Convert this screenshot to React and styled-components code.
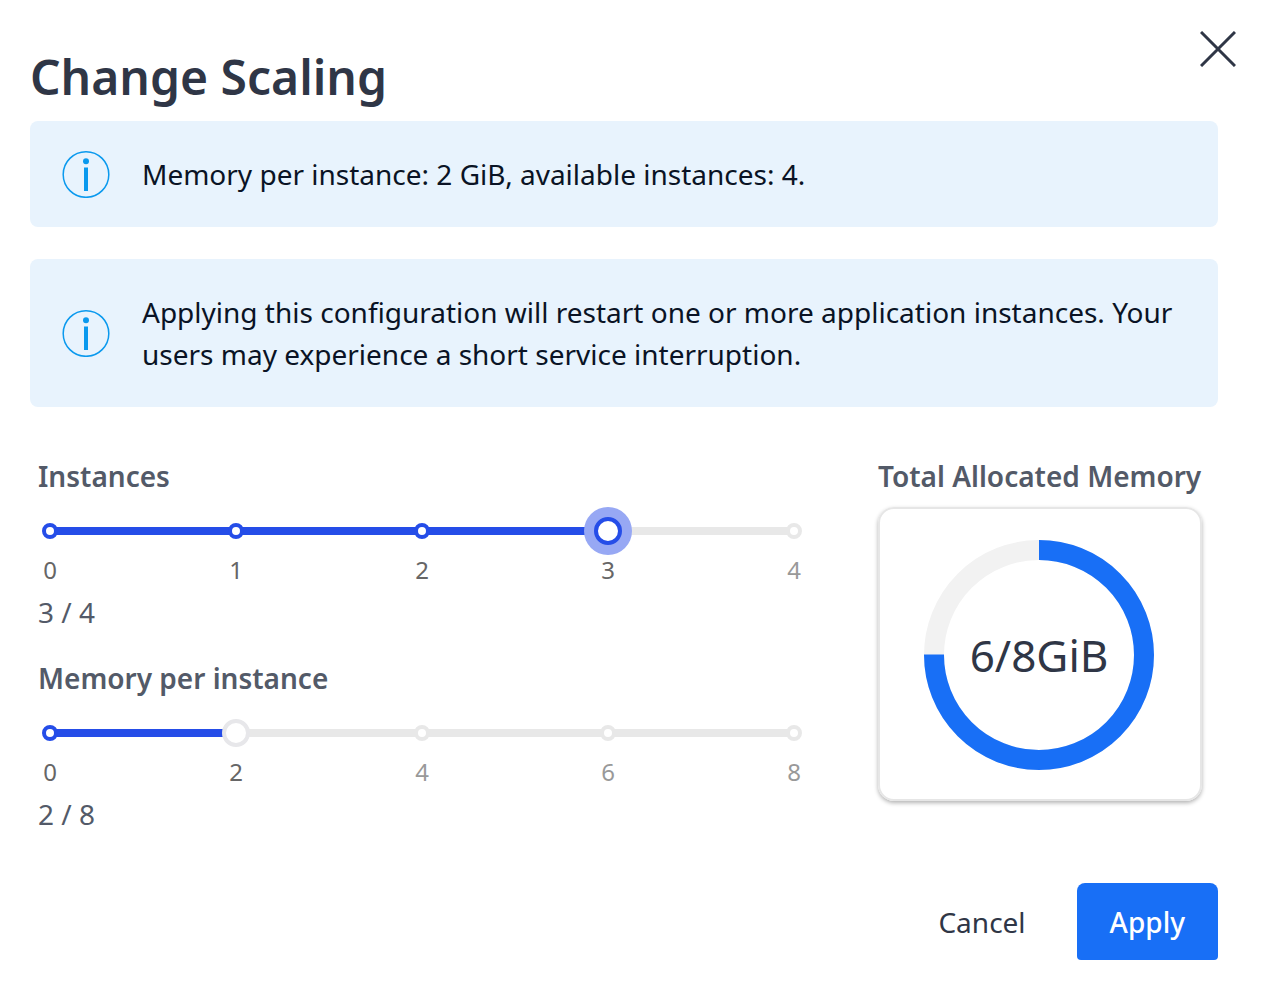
import React, { useState } from "react";
import styled, { createGlobalStyle } from "styled-components";

const GlobalStyle = createGlobalStyle`
  * { box-sizing: border-box; }
  body {
    margin: 0;
    background: #fff;
    font-family: "Noto Sans", sans-serif;
    font-size: 28px;
    line-height: 42px;
    color: #2f3646;
  }
`;

const Dialog = styled.main`
  padding: 0 30px 30px;
`;

const Header = styled.header`
  display: flex;
  justify-content: space-between;
  align-items: flex-start;
  padding: 31px 0 12px;
`;

const Title = styled.h1`
  margin: 14px 0 0;
  font-size: 48px;
  font-weight: 600;
  line-height: 64px;
`;

const CloseButton = styled.button`
  display: flex;
  padding: 0;
  border: 0;
  background: none;
  color: inherit;
  cursor: pointer;
`;

const Content = styled.div`
  margin-right: 18px;
`;

const Alerts = styled.div`
  display: grid;
  gap: 32px;
`;

const Alert = styled.div`
  display: flex;
  align-items: center;
  gap: 32px;
  padding: 29px 32px;
  border-radius: 8px;
  background: #e8f3fd;
  color: #0a1325;

  p { margin: 3px 0; }
  svg { flex: none; }
`;

const Settings = styled.div`
  display: flex;
  align-items: flex-start;
  gap: 72px;
  padding: 48px 16px 0 8px;
`;

const Sliders = styled.div`
  flex: 1;
  display: grid;
  gap: 24px;
`;

const Field = styled.div`
  color: #535a68;
`;

const FieldLabel = styled.label`
  display: block;
  font-weight: 600;
`;

const SliderBox = styled.div`
  display: grid;
  align-items: center;
  height: 48px;
  margin-top: 10px;

  > * { grid-area: 1 / 1; }
`;

const Rail = styled.div`
  height: 8px;
  margin: 0 12px;
  background: #e8e8e8;
`;

const Fill = styled.div`
  height: 100%;
  background: #254de8;
`;

const Dots = styled.div`
  display: flex;
  justify-content: space-between;
  margin: 0 4px;
`;

const Dot = styled.span`
  width: 16px;
  height: 16px;
  border: 4px solid ${(p) => (p.$on ? "#254de8" : "#e8e8e8")};
  border-radius: 50%;
  background: #fff;
`;

const Range = styled.input`
  appearance: none;
  z-index: 1;
  width: calc(100% + 4px);
  height: 48px;
  margin: 0 -2px;
  background: transparent;
  outline: none;
  cursor: pointer;

  &::-webkit-slider-thumb {
    appearance: none;
    width: 28px;
    height: 28px;
    border: 4px solid ${(p) => (p.$active ? "#254de8" : "#e7e7ea")};
    border-radius: 50%;
    background: #fff;
    box-shadow: ${(p) => (p.$active ? "0 0 0 10px #97a8f4" : "none")};
  }
`;

const Marks = styled.div`
  display: flex;
  justify-content: space-between;
  font-size: 24px;
  line-height: 30px;
`;

const Mark = styled.span`
  width: 24px;
  text-align: center;
  color: ${(p) => (p.$on ? "#666" : "#999")};
`;

const Value = styled.div`
  margin-top: 6px;
`;

const Memory = styled.section`
  flex: none;
  width: 324px;
`;

const MemoryTitle = styled.h2`
  margin: 0 0 10px;
  font-size: 28px;
  font-weight: 600;
  line-height: 42px;
  color: #535a68;
  white-space: nowrap;
`;

const MemoryCard = styled.div`
  display: grid;
  place-items: center;
  padding: 31px 2px 29px 0;
  border: 2px solid #e6e6e6;
  border-radius: 16px;
  box-shadow: 0 2px 4px rgba(0, 0, 0, 0.3);

  > * { grid-area: 1 / 1; }
`;

const Total = styled.span`
  font-size: 44px;
`;

const Footer = styled.footer`
  display: flex;
  justify-content: flex-end;
  gap: 18px;
  margin-top: 48px;
`;

const Button = styled.button`
  padding: 18px 33px 17px;
  border: 0;
  border-radius: 8px 8px 4px 4px;
  background: ${(p) => (p.$primary ? "#186ff6" : "transparent")};
  color: ${(p) => (p.$primary ? "#fff" : "#2f3646")};
  font: inherit;
  font-weight: ${(p) => (p.$primary ? 500 : 400)};
  cursor: pointer;
`;

const InfoIcon = () => (
  <svg width="48" height="48" viewBox="0 0 48 48" fill="none" aria-hidden="true">
    <circle cx="24" cy="24.5" r="22.8" stroke="#0a99ee" strokeWidth="1.5" />
    <circle cx="24" cy="11.3" r="3" fill="#0a99ee" />
    <path d="M24 17.5v23.5" stroke="#0a99ee" strokeWidth="4" />
  </svg>
);

const CloseIcon = () => (
  <svg width="36" height="36" viewBox="0 0 36 36" fill="none" aria-hidden="true">
    <path d="M1 1l34 34M35 1L1 35" stroke="currentColor" strokeWidth="3" />
  </svg>
);

function Slider({ id, label, max, step, value, onChange, active }) {
  const stops = Array.from({ length: max / step + 1 }, (_, i) => i * step);
  return (
    <Field>
      <FieldLabel htmlFor={id}>{label}</FieldLabel>
      <SliderBox>
        <Rail>
          <Fill style={{ width: `${(value / max) * 100}%` }} />
        </Rail>
        <Dots>
          {stops.map((s) => (
            <Dot key={s} $on={s <= value} />
          ))}
        </Dots>
        <Range
          id={id}
          type="range"
          min="0"
          max={max}
          step={step}
          value={value}
          $active={active}
          onChange={(e) => onChange(Number(e.target.value))}
        />
      </SliderBox>
      <Marks>
        {stops.map((s) => (
          <Mark key={s} $on={s <= value}>{s}</Mark>
        ))}
      </Marks>
      <Value>{value} / {max}</Value>
    </Field>
  );
}

function Ring({ ratio }) {
  const length = 2 * Math.PI * 105;
  return (
    <svg width="230" height="230" viewBox="0 0 230 230" fill="none" aria-hidden="true">
      <circle cx="115" cy="115" r="105" stroke="#f2f2f2" strokeWidth="20" />
      <circle
        cx="115"
        cy="115"
        r="105"
        stroke="#186ff6"
        strokeWidth="20"
        strokeDasharray={`${length * ratio} ${length}`}
        transform="rotate(-90 115 115)"
      />
    </svg>
  );
}

export default function App() {
  const [instances, setInstances] = useState(3);
  const [memory, setMemory] = useState(2);
  const total = instances * memory;

  return (
    <Dialog>
      <GlobalStyle />
      <Header>
        <Title>Change Scaling</Title>
        <CloseButton type="button" aria-label="Close">
          <CloseIcon />
        </CloseButton>
      </Header>
      <Content>
        <Alerts>
          <Alert>
            <InfoIcon />
            <p>Memory per instance: 2 GiB, available instances: 4.</p>
          </Alert>
          <Alert>
            <InfoIcon />
            <p>
              Applying this configuration will restart one or more application instances. Your
              users may experience a short service interruption.
            </p>
          </Alert>
        </Alerts>
        <Settings>
          <Sliders>
            <Slider id="instances" label="Instances" max={4} step={1} value={instances} onChange={setInstances} active />
            <Slider id="memory" label="Memory per instance" max={8} step={2} value={memory} onChange={setMemory} />
          </Sliders>
          <Memory>
            <MemoryTitle>Total Allocated Memory</MemoryTitle>
            <MemoryCard>
              <Ring ratio={Math.min(total / 8, 1)} />
              <Total>{total}/8GiB</Total>
            </MemoryCard>
          </Memory>
        </Settings>
        <Footer>
          <Button type="button">Cancel</Button>
          <Button type="button" $primary>Apply</Button>
        </Footer>
      </Content>
    </Dialog>
  );
}
